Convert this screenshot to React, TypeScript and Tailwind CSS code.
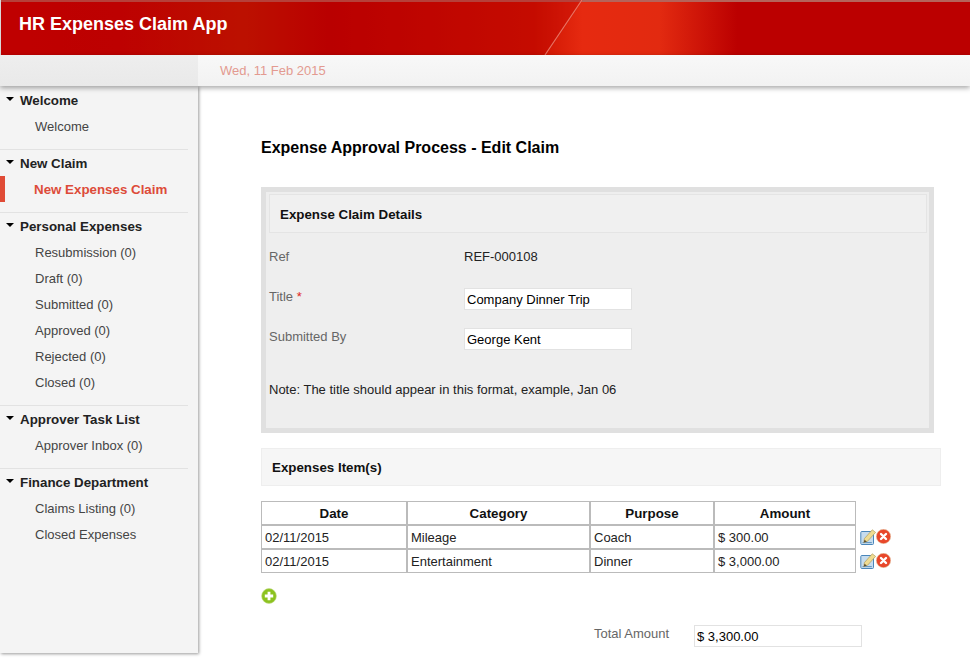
const font = "font-['Liberation_Sans',Arial,sans-serif]";

const menu = [
  { title: "Welcome", items: ["Welcome"] },
  { title: "New Claim", items: ["New Expenses Claim"] },
  {
    title: "Personal Expenses",
    items: ["Resubmission (0)", "Draft (0)", "Submitted (0)", "Approved (0)", "Rejected (0)", "Closed (0)"],
  },
  { title: "Approver Task List", items: ["Approver Inbox (0)"] },
  { title: "Finance Department", items: ["Claims Listing (0)", "Closed Expenses"] },
];

const rows = [
  { date: "02/11/2015", category: "Mileage", purpose: "Coach", amount: "$ 300.00" },
  { date: "02/11/2015", category: "Entertainment", purpose: "Dinner", amount: "$ 3,000.00" },
];

function EditIcon() {
  return (
    <svg width="16" height="16" viewBox="0 0 16 16" className="shrink-0">
      <rect x="0.8" y="2.5" width="12.7" height="13" rx="1" fill="#c6dcee" stroke="#4a86ba" />
      <path d="M2.5 13.6 H11.8" stroke="#5f93bf" />
      <path d="M4.4 9.6 L12.3 0.8 L15.6 3.4 L7.6 12.2 L3.8 13.6 Z" fill="#efdc92" stroke="#a8924e" strokeWidth="0.6" />
      <path d="M3.8 13.6 L4.5 10.8 L6.8 12.6 Z" fill="#5a4a2a" />
    </svg>
  );
}

function DeleteIcon() {
  return (
    <svg width="15" height="15" viewBox="0 0 15 15" className="mb-[1px] shrink-0">
      <circle cx="7.5" cy="7.5" r="7.2" fill="#e8472a" stroke="#e6c8a8" strokeWidth="0.6" />
      <path d="M5 5 L10 10 M10 5 L5 10" stroke="#fff" strokeWidth="2.4" strokeLinecap="round" />
    </svg>
  );
}

function AddIcon() {
  return (
    <svg width="16" height="16" viewBox="0 0 16 16">
      <circle cx="8" cy="8" r="7.4" fill="#8cc21f" stroke="#c2dc8a" strokeWidth="0.6" />
      <path d="M8 3.8 V12.2 M3.8 8 H12.2" stroke="#fff" strokeWidth="2.8" />
    </svg>
  );
}

function Field({ value }: { value: string }) {
  return (
    <input
      readOnly
      value={value}
      className="h-[22px] w-[168px] border border-[#e2e2e2] bg-white px-[2px] text-[13px] text-black outline-none"
    />
  );
}

export default function App() {
  return (
    <div className={`${font} h-[666px] overflow-hidden bg-white text-[13px] text-[#222]`}>
      <header className="relative h-[55px] overflow-hidden border-l border-[#d8d8d8] bg-[linear-gradient(90deg,#c40000_0%,#c00202_12%,#bf1a00_25%,#bb0000_34%,#cc1200_55%,#e62a10_60%,#e22a10_68%,#bb0000_76%,#bb0000_100%)]">
        <div className="absolute inset-x-0 top-0 h-[2px] bg-[#b5635a]" />
        <svg width="970" height="55" className="absolute inset-0">
          <path d="M0 0 H582 L545 55 H0 Z" fill="#b80000" opacity="0.35" />
          <path d="M581 0 L544 55" stroke="#f08a78" strokeWidth="1.2" opacity="0.8" />
        </svg>
        <h1 className="relative pl-[18px] pt-[14px] text-[18px] leading-[21px] font-bold text-white">
          HR Expenses Claim App
        </h1>
      </header>

      <div className="relative z-10 flex h-[31px] shadow-[0_2px_5px_rgba(0,0,0,0.35)]">
        <div className="w-[198px] bg-[linear-gradient(180deg,#eeeeee,#e9e9e9)]" />
        <div className="flex flex-1 items-center bg-[linear-gradient(180deg,#f8f8f8,#f2f2f2)] pl-[22px] text-[#e39a90]">
          Wed, 11 Feb 2015
        </div>
      </div>

      <div className="flex items-start">
        <aside className="h-[567px] w-[198px] shrink-0 bg-[#f4f4f4] pt-[1px] shadow-[1px_1px_3px_rgba(0,0,0,0.4)]">
          {menu.map((section, i) => (
            <section
              key={section.title}
              className={i < menu.length - 1 ? "mr-[10px] border-b border-[#e2e2e2] pb-[10px]" : "mr-[10px]"}
            >
              <div className="flex h-[26px] items-center pt-[2px]">
                <span className="mb-[5px] ml-[6px] mr-[6px] h-0 w-0 border-x-[4px] border-t-[4px] border-x-transparent border-t-black" />
                <span className="text-[13.33px] font-bold text-[#222]">{section.title}</span>
              </div>
              {section.items.map((item) => {
                const active = item === "New Expenses Claim";
                return (
                  <div
                    key={item}
                    className={
                      active
                        ? "flex h-[26px] items-center border-l-[5px] border-[#e04b36] pl-[29px] pt-[2px] text-[13.33px] font-bold text-[#dd4b39]"
                        : "flex h-[26px] items-center pl-[35px] pt-[2px] text-[#444]"
                    }
                  >
                    {item}
                  </div>
                );
              })}
            </section>
          ))}
        </aside>

        <main className="min-w-0 flex-1 pl-[63px] pr-[29px]">
          <h2 className="pt-[52px] text-[16px] leading-[20px] font-bold text-black">
            Expense Approval Process - Edit Claim
          </h2>

          <div className="mt-[29px] h-[246px] w-[673px] border-[5px] border-[#e0e0e0] bg-[#eeeeee] pl-[3px] pr-[2px] pt-[2px]">
            <div className="flex h-[39px] items-center border border-[#e4e4e4] bg-[#f0f0f0] pl-[10px] pt-[2px] text-[13.33px] font-bold text-[#111]">
              Expense Claim Details
            </div>
            <div className="flex h-[46px] items-center pt-[2px]">
              <span className="w-[195px] text-[#666]">Ref</span>
              <span className="text-[#222]">REF-000108</span>
            </div>
            <div className="mt-[9px] flex h-[34px] items-start">
              <span className="-mt-[1px] w-[195px] text-[#666]">
                Title <span className="text-[#e0261c]">*</span>
              </span>
              <Field value="Company Dinner Trip" />
            </div>
            <div className="mt-[6px] flex h-[34px] items-start">
              <span className="-mt-[1px] w-[195px] text-[#666]">Submitted By</span>
              <Field value="George Kent" />
            </div>
            <p className="pt-[18px] text-[#222]">Note: The title should appear in this format, example, Jan 06</p>
          </div>

          <div className="mt-[15px] flex h-[38px] w-[680px] items-center border border-[#eeeeee] bg-[#f6f6f6] pl-[10px] pt-[2px] text-[13.33px] font-bold text-[#111]">
            Expenses Item(s)
          </div>

          <div className="mt-[15px] flex items-start">
            <table className="w-[595px] table-fixed border-separate border-spacing-0">
              <thead>
                <tr>
                  <th className="h-[24px] w-[146px] border border-[#bbbbbb] p-0 pt-[2px] text-[13.33px] font-bold text-[#111]">Date</th>
                  <th className="h-[24px] w-[183px] border border-[#bbbbbb] p-0 pt-[2px] text-[13.33px] font-bold text-[#111]">Category</th>
                  <th className="h-[24px] w-[124px] border border-[#bbbbbb] p-0 pt-[2px] text-[13.33px] font-bold text-[#111]">Purpose</th>
                  <th className="h-[24px] w-[142px] border border-[#bbbbbb] p-0 pt-[2px] text-[13.33px] font-bold text-[#111]">Amount</th>
                </tr>
              </thead>
              <tbody>
                {rows.map((row) => (
                  <tr key={row.amount}>
                    <td className="h-[24px] border border-[#bbbbbb] px-[3px] pb-0 pt-[2px] text-[#222]">{row.date}</td>
                    <td className="h-[24px] border border-[#bbbbbb] px-[3px] pb-0 pt-[2px] text-[#222]">{row.category}</td>
                    <td className="h-[24px] border border-[#bbbbbb] px-[3px] pb-0 pt-[2px] text-[#222]">{row.purpose}</td>
                    <td className="h-[24px] border border-[#bbbbbb] px-[3px] pb-0 pt-[2px] text-[#222]">{row.amount}</td>
                  </tr>
                ))}
              </tbody>
            </table>
            <div className="ml-[4px] pt-[24px]">
              {rows.map((row) => (
                <div key={row.amount} className="flex h-[24px] items-center">
                  <EditIcon />
                  <DeleteIcon />
                </div>
              ))}
            </div>
          </div>

          <div className="mt-[15px]">
            <AddIcon />
          </div>

          <div className="mt-[21px] flex items-start pl-[333px]">
            <span className="-mt-[1px] w-[100px] text-[#666]">Total Amount</span>
            <Field value="$ 3,300.00" />
          </div>
        </main>
      </div>
    </div>
  );
}
